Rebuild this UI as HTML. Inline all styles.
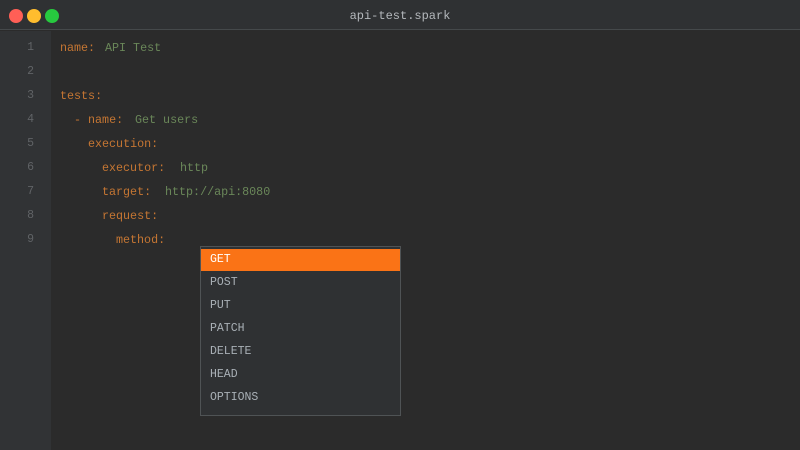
<!DOCTYPE html>
<html><head><meta charset="utf-8"><style>
*{margin:0;padding:0;box-sizing:border-box}
body{width:800px;height:450px;background:#2b2b2b;overflow:hidden;position:relative;font-family:"Liberation Mono","DejaVu Sans Mono",monospace;font-size:11.7px}
.tb{position:absolute;left:0;top:0;width:800px;height:30px;background:#2f3133;border-bottom:1px solid #45494b}
.dot{position:absolute;top:9px;width:14px;height:14px;border-radius:50%}
.title{position:absolute;left:0;right:0;top:9px;text-align:center;color:#b4b8bc;font-size:12px}
.gut{position:absolute;left:0;top:31px;width:51px;height:419px;background:#313335}
.ln{position:absolute;left:0;width:34px;text-align:right;color:#606366;font-size:11.5px}
.k{position:absolute;color:#c57633;white-space:pre}
.v{position:absolute;color:#6a8759;white-space:pre}
.dd{position:absolute;left:200px;top:246px;width:201px;height:170px;background:#2f3133;border:1px solid #4f5355}
.it{position:absolute;left:0;width:199px;height:22px;padding-left:9px;line-height:22px;color:#a9b0b6;font-size:11.5px}
.sel{background:#fa7316;color:#fff}
</style></head><body>
<div class="tb">
<div class="dot" style="left:9px;background:#ff5f56"></div>
<div class="dot" style="left:27px;background:#ffbd2e"></div>
<div class="dot" style="left:45px;background:#27c93f"></div>
<div class="title">api-test.spark</div>
</div>
<div class="gut"></div>
<div class="ln" style="top:41px">1</div>
<div class="ln" style="top:65px">2</div>
<div class="ln" style="top:89px">3</div>
<div class="ln" style="top:113px">4</div>
<div class="ln" style="top:137px">5</div>
<div class="ln" style="top:161px">6</div>
<div class="ln" style="top:185px">7</div>
<div class="ln" style="top:209px">8</div>
<div class="ln" style="top:233px">9</div>

<div class="k" style="left:60px;top:41px">name:</div><div class="v" style="left:105px;top:41px">API Test</div>
<div class="k" style="left:60px;top:89px">tests:</div>
<div class="k" style="left:74px;top:113px">- name:</div><div class="v" style="left:135px;top:113px">Get users</div>
<div class="k" style="left:88px;top:137px">execution:</div>
<div class="k" style="left:102px;top:161px">executor:</div><div class="v" style="left:180px;top:161px">http</div>
<div class="k" style="left:102px;top:185px">target:</div><div class="v" style="left:165px;top:185px">http://api:8080</div>
<div class="k" style="left:102px;top:209px">request:</div>
<div class="k" style="left:116px;top:233px">method:</div>

<div class="dd">
<div class="it sel" style="top:2px">GET</div>
<div class="it" style="top:25px">POST</div>
<div class="it" style="top:48px">PUT</div>
<div class="it" style="top:71px">PATCH</div>
<div class="it" style="top:94px">DELETE</div>
<div class="it" style="top:117px">HEAD</div>
<div class="it" style="top:140px">OPTIONS</div>
</div>
</body></html>
